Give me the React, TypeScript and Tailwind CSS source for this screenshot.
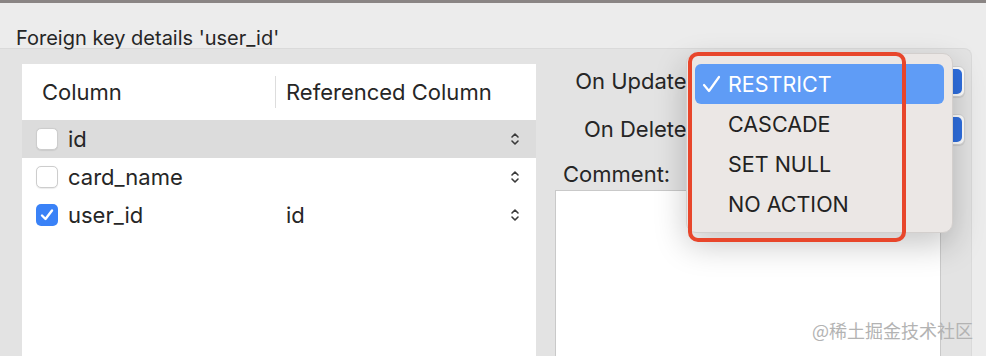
import React from 'react';

const rows = [
  { name: 'id', ref: '', checked: false, selected: true },
  { name: 'card_name', ref: '', checked: false, selected: false },
  { name: 'user_id', ref: 'id', checked: true, selected: false },
];

const actions = ['RESTRICT', 'CASCADE', 'SET NULL', 'NO ACTION'];

function Stepper() {
  return (
    <svg width="10" height="16" viewBox="0 0 10 16" fill="none" stroke="#3a3a3a" strokeWidth="1.6" strokeLinecap="round" strokeLinejoin="round">
      <path d="M2 6 L5 3 L8 6" />
      <path d="M2 10 L5 13 L8 10" />
    </svg>
  );
}

function Checkbox({ checked }: { checked: boolean }) {
  if (checked) {
    return (
      <div className="flex h-[22px] w-[22px] items-center justify-center rounded-[5px] bg-[#3a82f7]">
        <svg width="16" height="16" viewBox="0 0 16 16" fill="none" stroke="white" strokeWidth="2.4" strokeLinecap="round" strokeLinejoin="round">
          <path d="M3 8.5 L6.5 12 L13 3.5" />
        </svg>
      </div>
    );
  }
  return <div className="h-[22px] w-[22px] rounded-[5px] border border-[#cdcdcd] bg-white shadow-[0_0.5px_1px_rgba(0,0,0,0.08)]" />;
}

function SelectButton() {
  return (
    <div className="flex h-[31px] w-[270px] items-center justify-end rounded-[6px] border border-[#d4d4d4] bg-white shadow-[0_1px_1px_rgba(0,0,0,0.1)]">
      <div className="mr-[2px] h-[25px] w-[20px] rounded-[5px] bg-[#2f6fe0]" />
    </div>
  );
}

export default function App() {
  return (
    <div className="relative h-[356px] w-[986px] overflow-hidden bg-[#ececec] font-['Inter','Noto_Sans',sans-serif] text-[#262626]">
      {/* window top edge */}
      <div className="h-[3px] bg-[#8a8584]" />

      <div className="h-[45px] pl-4 pt-[23px] text-[20px] leading-[24px]">Foreign key details 'user_id'</div>

      {/* group box */}
      <div className="flex h-[308px] w-[972px] items-start gap-[19px] rounded-tr-[8px] border-t border-r border-[#dadada] bg-[#e3e3e3] pl-[22px] pt-[15px]">
        {/* columns table */}
        <div className="h-[300px] w-[514px] bg-white">
          <div className="flex h-[56px] items-center text-[22px]">
            <div className="w-[253px] pl-5">Column</div>
            <div className="h-[32px] w-px bg-[#dddddd]" />
            <div className="pl-[10px]">Referenced Column</div>
          </div>
          {rows.map((r) => (
            <div
              key={r.name}
              className={`flex h-[38px] items-center text-[22px] ${r.selected ? 'bg-[#dcdcdc]' : ''}`}
            >
              <div className="flex w-[264px] items-center gap-[10px] pl-[14px]">
                <Checkbox checked={r.checked} />
                <span>{r.name}</span>
              </div>
              <div className="flex-1">{r.ref}</div>
              <div className="pr-[16px]">
                <Stepper />
              </div>
            </div>
          ))}
        </div>

        {/* actions */}
        <div className="flex w-[410px] flex-col pt-[2px] text-[22px]">
          <div className="flex h-[31px] items-center">
            <div className="w-[138px] text-right">On Update:</div>
            <div className="ml-[2px]">
              <SelectButton />
            </div>
          </div>
          <div className="mt-[17px] flex h-[31px] items-center">
            <div className="w-[138px] text-right">On Delete:</div>
            <div className="ml-[2px]">
              <SelectButton />
            </div>
          </div>
          <div className="mt-[17px] pl-2 leading-[24px]">Comment:</div>
          <div className="mt-[4px] h-[200px] w-[386px] border border-[#c9c9c9] bg-white" />
        </div>
      </div>

      {/* open popup menu */}
      <div className="absolute left-[686px] top-[53px] h-[180px] w-[267px] rounded-[10px] border border-[#d3cfcd] bg-[#ebe7e5] px-[8px] pt-[10px] text-[21.5px] shadow-[0_12px_32px_rgba(0,0,0,0.22)]">
        {actions.map((a, i) => (
          <div
            key={a}
            className={`relative flex h-[40px] items-center pl-[33px] ${i === 0 ? 'rounded-[6px] bg-[#5f9cf6] text-white' : 'text-[#222]'}`}
          >
            {i === 0 && (
              <svg className="absolute left-[7px] top-[11px]" width="19" height="19" viewBox="0 0 19 19" fill="none" stroke="white" strokeWidth="2.2" strokeLinecap="round" strokeLinejoin="round">
                <path d="M2 10 L7 16 L17 2" />
              </svg>
            )}
            {a}
          </div>
        ))}
      </div>

      {/* annotation */}
      <div className="absolute left-[688px] top-[52px] h-[190px] w-[218px] rounded-[10px] border-[4px] border-[#e8462b]" />

      <div className="absolute left-[812px] top-[317px] font-['Noto_Sans_CJK_SC',sans-serif] text-[18px] text-[#b3b3b3]">
        @稀土掘金技术社区
      </div>
    </div>
  );
}
